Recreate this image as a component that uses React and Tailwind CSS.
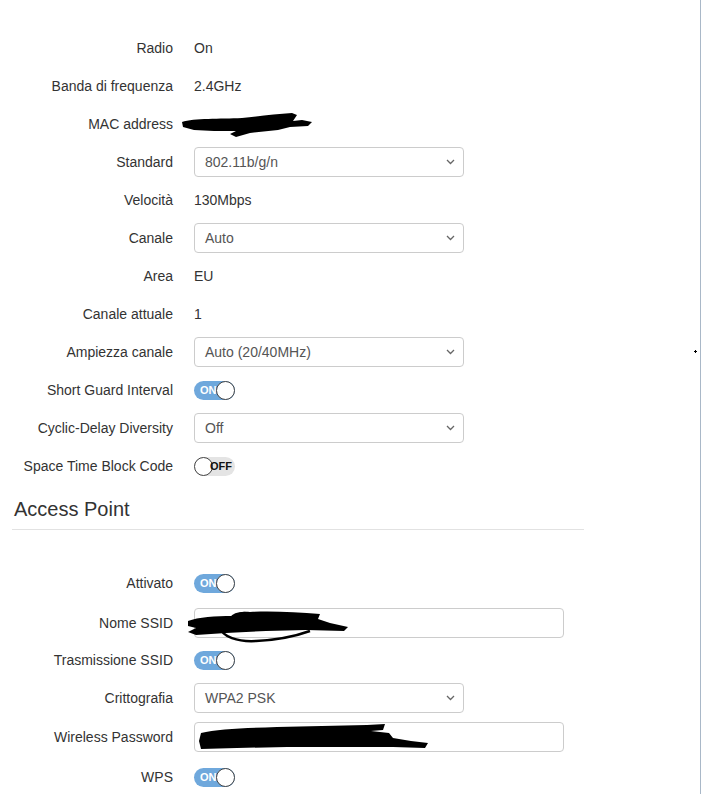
import React from 'react'

const font = { fontFamily: '"Liberation Sans", Arial, sans-serif' }

function Toggle({ on }) {
  if (on) {
    return (
      <div className="relative w-[41px] h-[19px] rounded-full bg-[#6fa8dc]">
        <span className="absolute left-[6px] top-[2px] text-[11px] leading-[15px] font-bold text-white">ON</span>
        <span className="absolute right-0 top-0 w-[19px] h-[19px] rounded-full bg-white border border-[#444]"></span>
      </div>
    )
  }
  return (
    <div className="relative w-[41px] h-[19px] rounded-full bg-[#e4e4e4]">
      <span className="absolute left-0 top-0 w-[19px] h-[19px] rounded-full bg-white border border-[#444]"></span>
      <span className="absolute right-[3px] top-[2px] text-[11px] leading-[15px] font-bold text-[#111]">OFF</span>
    </div>
  )
}

function Select({ value }) {
  return (
    <div className="w-[270px] h-[30px] rounded-[4px] border border-[#ccc] bg-white flex items-center justify-between pl-[10px] pr-[8px] text-[14px] text-[#555]">
      <span>{value}</span>
      <svg width="9" height="6" viewBox="0 0 9 6" fill="none" stroke="#666" strokeWidth="1.3">
        <path d="M1 1l3.5 3.5L8 1" />
      </svg>
    </div>
  )
}

function Row({ label, h = 'h-[38px]', children }) {
  return (
    <div className={`flex items-center ${h}`}>
      <div className="w-[173px] text-right text-[14px] text-[#333]">{label}</div>
      <div className="ml-[21px] flex-1 relative text-[14px] text-[#333]">{children}</div>
    </div>
  )
}

export default function App() {
  return (
    <div className="relative w-[701px] h-[794px] overflow-hidden bg-white border-r border-[#a9b8c8]" style={font}>
      <div className="pt-[29px]">
        <Row label="Radio">On</Row>
        <Row label="Banda di frequenza">2.4GHz</Row>
        <Row label="MAC address">
          <div className="h-[20px]">
            <svg className="absolute left-[-14px] top-[-1px]" width="134" height="26" viewBox="0 0 134 26">
              <path d="M2 9 C14 5 40 6 62 5 C82 3 96 1 112 0 L117 2 L113 8 L122 7 L132 9 L128 13 L110 14 L98 17 L70 20 L56 24 L50 21 L56 18 L34 18 L14 17 L3 14 Z" fill="#000" />
            </svg>
          </div>
        </Row>
        <Row label="Standard"><Select value="802.11b/g/n" /></Row>
        <Row label="Velocità">130Mbps</Row>
        <Row label="Canale"><Select value="Auto" /></Row>
        <Row label="Area">EU</Row>
        <Row label="Canale attuale">1</Row>
        <Row label="Ampiezza canale"><Select value="Auto (20/40MHz)" /></Row>
        <Row label="Short Guard Interval"><Toggle on /></Row>
        <Row label="Cyclic-Delay Diversity"><Select value="Off" /></Row>
        <Row label="Space Time Block Code"><Toggle on={false} /></Row>
      </div>

      <div className="ml-[12px] w-[572px] h-[45px] border-b border-[#e2e2e2] flex items-center pl-[2px] pt-[3px]">
        <h2 className="text-[20px] text-[#333] leading-none">Access Point</h2>
      </div>

      <div className="pt-[34px]">
        <Row label="Attivato"><Toggle on /></Row>
        <Row label="Nome SSID" h="h-[42px]">
          <div className="w-[370px] h-[30px] rounded-[4px] border border-[#ccc] bg-white"></div>
          <svg className="absolute left-[-8px] top-[2px]" width="166" height="34" viewBox="0 0 166 34">
            <path d="M2 11 C12 7 30 6 46 6 C52 3 56 1 64 2 C84 1 110 2 134 4 L132 9 L144 13 L162 17 L158 21 L120 20 L80 21 L40 23 L10 25 L2 22 L10 18 L2 16 Z" fill="#000" />
            <path d="M34 17 C36 27 52 32 70 31 C92 30 110 26 124 21" fill="none" stroke="#000" strokeWidth="2.5" />
            <path d="M44 10 C46 3 60 1 66 5" fill="none" stroke="#000" strokeWidth="2.5" />
          </svg>
        </Row>
        <Row label="Trasmissione SSID" h="h-[32px]"><Toggle on /></Row>
        <Row label="Crittografia" h="h-[44px]"><Select value="WPA2 PSK" /></Row>
        <Row label="Wireless Password" h="h-[34px]">
          <div className="w-[370px] h-[30px] rounded-[4px] border border-[#ccc] bg-white"></div>
          <svg className="absolute left-[3px] top-[2px]" width="232" height="26" viewBox="0 0 232 26">
            <path d="M4 9 C20 5 50 4 80 3 C110 2 140 2 170 1 L188 0 L186 6 L174 7 L192 9 L196 14 L214 17 L231 19 L228 24 L196 23 L150 23 L90 23 L40 24 L4 25 L2 17 Z" fill="#000" />
          </svg>
        </Row>
        <Row label="WPS" h="h-[46px]"><Toggle on /></Row>
      </div>

      <div className="absolute left-[694px] top-[351px] w-[3px] h-[1px] bg-black"></div>
      <div className="absolute left-[695px] top-[350px] w-[1px] h-[3px] bg-black"></div>
    </div>
  )
}
